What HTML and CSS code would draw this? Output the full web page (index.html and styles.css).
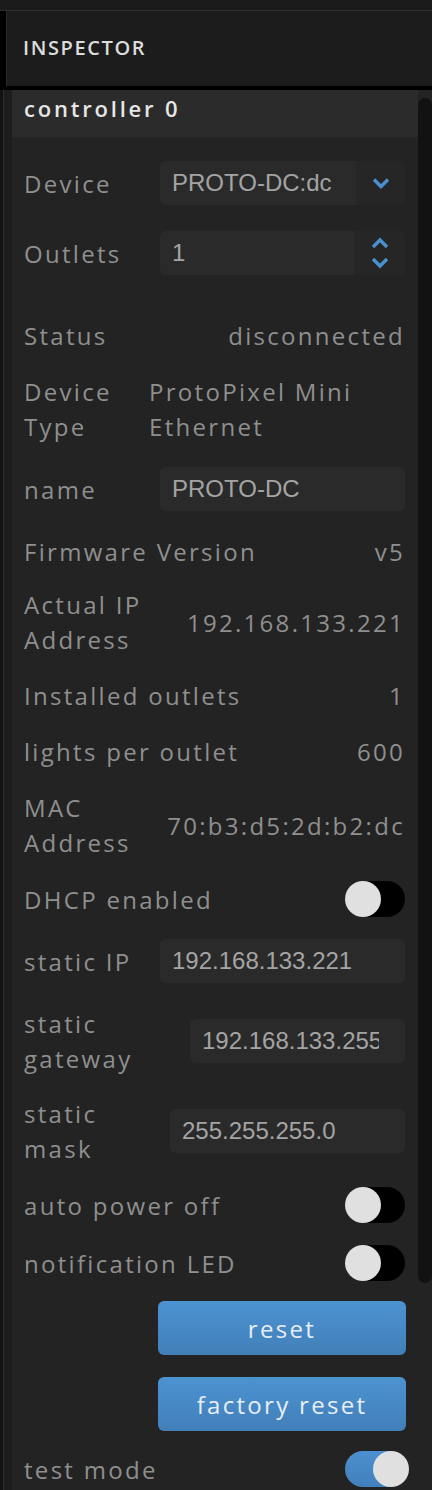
FILE: index.html
```html
<!DOCTYPE html>
<html lang="en">
<head>
<meta charset="utf-8">
<title>Inspector</title>
<link rel="stylesheet" href="styles.css">
</head>
<body>
<div class="topbar"></div>
<div class="header">
  <div class="hdr-gutter"></div>
  <div class="hdr-title">INSPECTOR</div>
</div>
<div class="sep"></div>
<div class="main">
  <div class="gutter"></div>
  <div class="panel">
    <div class="panel-title">controller 0</div>
    <div class="rows">
      <div class="row">
        <span class="label">Device</span>
        <div class="field select">
          <span class="field-text">PROTO-DC:dc</span>
          <span class="field-btn">
            <svg width="18" height="12" viewBox="0 0 18 12"><path d="M2 2.5 L9 9.5 L16 2.5" fill="none" stroke="#4a90d0" stroke-width="3.4"/></svg>
          </span>
        </div>
      </div>
      <div class="row mt-outlets">
        <span class="label">Outlets</span>
        <div class="field spin">
          <span class="field-text">1</span>
          <span class="field-btn spin-btn">
            <svg width="18" height="32" viewBox="0 0 18 32"><path d="M2 10 L9 3 L16 10" fill="none" stroke="#4a90d0" stroke-width="3.4"/><path d="M2 22 L9 29 L16 22" fill="none" stroke="#4a90d0" stroke-width="3.4"/></svg>
          </span>
        </div>
      </div>
      <div class="row mt-status">
        <span class="label">Status</span>
        <span class="value">disconnected</span>
      </div>
      <div class="row top">
        <span class="label narrow">Device<br>Type</span>
        <span class="value left">ProtoPixel Mini<br>Ethernet</span>
      </div>
      <div class="row mt-2">
        <span class="label">name</span>
        <div class="field"><span class="field-text">PROTO-DC</span></div>
      </div>
      <div class="row mt-2">
        <span class="label">Firmware Version</span>
        <span class="value">v5</span>
      </div>
      <div class="row mt-n3">
        <span class="label">Actual IP<br>Address</span>
        <span class="value">192.168.133.221</span>
      </div>
      <div class="row">
        <span class="label">Installed outlets</span>
        <span class="value">1</span>
      </div>
      <div class="row">
        <span class="label">lights per outlet</span>
        <span class="value">600</span>
      </div>
      <div class="row">
        <span class="label">MAC<br>Address</span>
        <span class="value">70:b3:d5:2d:b2:dc</span>
      </div>
      <div class="row">
        <span class="label">DHCP enabled</span>
        <span class="toggle"><span class="knob"></span></span>
      </div>
      <div class="row mt-1">
        <span class="label">static IP</span>
        <div class="field"><span class="field-text">192.168.133.221</span></div>
      </div>
      <div class="row mt-2">
        <span class="label">static<br>gateway</span>
        <div class="field w-gateway"><span class="field-text">192.168.133.255</span></div>
      </div>
      <div class="row mt-n1">
        <span class="label">static<br>mask</span>
        <div class="field w-mask"><span class="field-text">255.255.255.0</span></div>
      </div>
      <div class="row">
        <span class="label">auto power off</span>
        <span class="toggle"><span class="knob"></span></span>
      </div>
      <div class="row mt-1">
        <span class="label">notification LED</span>
        <span class="toggle"><span class="knob"></span></span>
      </div>
      <div class="row end mt-n1">
        <button class="btn">reset</button>
      </div>
      <div class="row end mt-1">
        <button class="btn">factory reset</button>
      </div>
      <div class="row mt-n1">
        <span class="label">test mode</span>
        <span class="toggle on"><span class="knob"></span></span>
      </div>
    </div>
  </div>
  <div class="scroll"><div class="thumb"></div></div>
</div>
</body>
</html>
```

FILE: styles.css
```css
html, body {
  margin: 0;
  padding: 0;
}
body {
  width: 432px;
  height: 1490px;
  overflow: hidden;
  background: #1c1c1c;
  font-family: "Open Sans", "Noto Sans", sans-serif;
}
.topbar {
  height: 10px;
  background: #1b1b1b;
  border-bottom: 1px solid #303030;
}
.header {
  display: flex;
  height: 75px;
}
.hdr-gutter {
  width: 6px;
  background: #000;
  border-right: 1px solid #2a2a2a;
}
.hdr-title {
  flex: 1;
  background: #1c1c1c;
  padding-left: 16px;
  padding-bottom: 2px;
  display: flex;
  align-items: center;
  color: #dcdcdc;
  font-size: 20px;
  font-weight: 600;
  letter-spacing: 1.6px;
}
.sep {
  height: 4px;
  background: #000;
}
.main {
  display: flex;
  height: 1400px;
}
.gutter {
  width: 12px;
  background: linear-gradient(to right, #121212 0 3px, #2c2c2c 3px 4px, #1d1d1d 4px);
}
.panel {
  width: 406px;
  background: #232323;
}
.panel-title {
  height: 47px;
  box-sizing: border-box;
  padding: 0 12px 10px;
  line-height: 37px;
  background: #2b2b2b;
  color: #e6e6e6;
  font-size: 22px;
  font-weight: 600;
  letter-spacing: 2.8px;
}
.rows {
  display: flex;
  flex-direction: column;
  gap: 21px;
  padding: 24px 13px 0 12px;
}
.row {
  display: flex;
  align-items: center;
  justify-content: space-between;
  min-height: 35px;
}
.row.top {
  align-items: flex-start;
  justify-content: flex-start;
}
.row.end {
  justify-content: flex-end;
}
.mt-outlets { margin-top: 5px; }
.mt-status { margin-top: 22px; }
.mt-2 { margin-top: 2px; }
.mt-1 { margin-top: 1px; }
.mt-n1 { margin-top: -1px; }
.mt-n3 { margin-top: -3px; }
.label, .value {
  font-size: 24px;
  line-height: 35px;
  letter-spacing: 2.3px;
  color: #8f8f8f;
  white-space: nowrap;
}
.label.narrow {
  width: 125px;
}
.value {
  text-align: right;
}
.value.left {
  text-align: left;
}
.field {
  width: 245px;
  height: 44px;
  box-sizing: border-box;
  background: #2a2a2a;
  border-radius: 6px;
  display: flex;
  align-items: center;
  overflow: hidden;
}
.field-text {
  flex: 1;
  min-width: 0;
  margin: 0 12px;
  font-family: "Liberation Sans", Arial, sans-serif;
  font-size: 24px;
  color: #a4a4a4;
  white-space: nowrap;
  overflow: hidden;
}
.w-gateway {
  width: 215px;
}
.w-gateway .field-text {
  margin-right: 26px;
}
.w-mask {
  width: 235px;
}
.field-btn {
  width: 49px;
  height: 44px;
  flex: none;
  background: #262626;
  display: flex;
  align-items: center;
  justify-content: center;
}
.spin-btn {
  width: 51px;
}
.toggle {
  position: relative;
  width: 60px;
  height: 36px;
  border-radius: 18px;
  background: #000;
  flex: none;
}
.knob {
  position: absolute;
  top: 0;
  left: 0;
  width: 36px;
  height: 36px;
  border-radius: 50%;
  background: #e0e0e0;
}
.toggle.on {
  background: linear-gradient(#4b90cf, #4280bb);
}
.toggle.on .knob {
  left: 28px;
}
.btn {
  width: 248px;
  height: 54px;
  margin-right: -1px;
  border: none;
  border-radius: 6px;
  background: linear-gradient(#4b93d1, #427fb9);
  color: #e8eef5;
  font-family: "Open Sans", "Noto Sans", sans-serif;
  font-size: 24px;
  letter-spacing: 2.3px;
  padding: 0;
}
.scroll {
  width: 14px;
  background: #232323;
}
.thumb {
  margin-top: 8px;
  height: 1185px;
  background: #121212;
  border-radius: 7px;
}
```
